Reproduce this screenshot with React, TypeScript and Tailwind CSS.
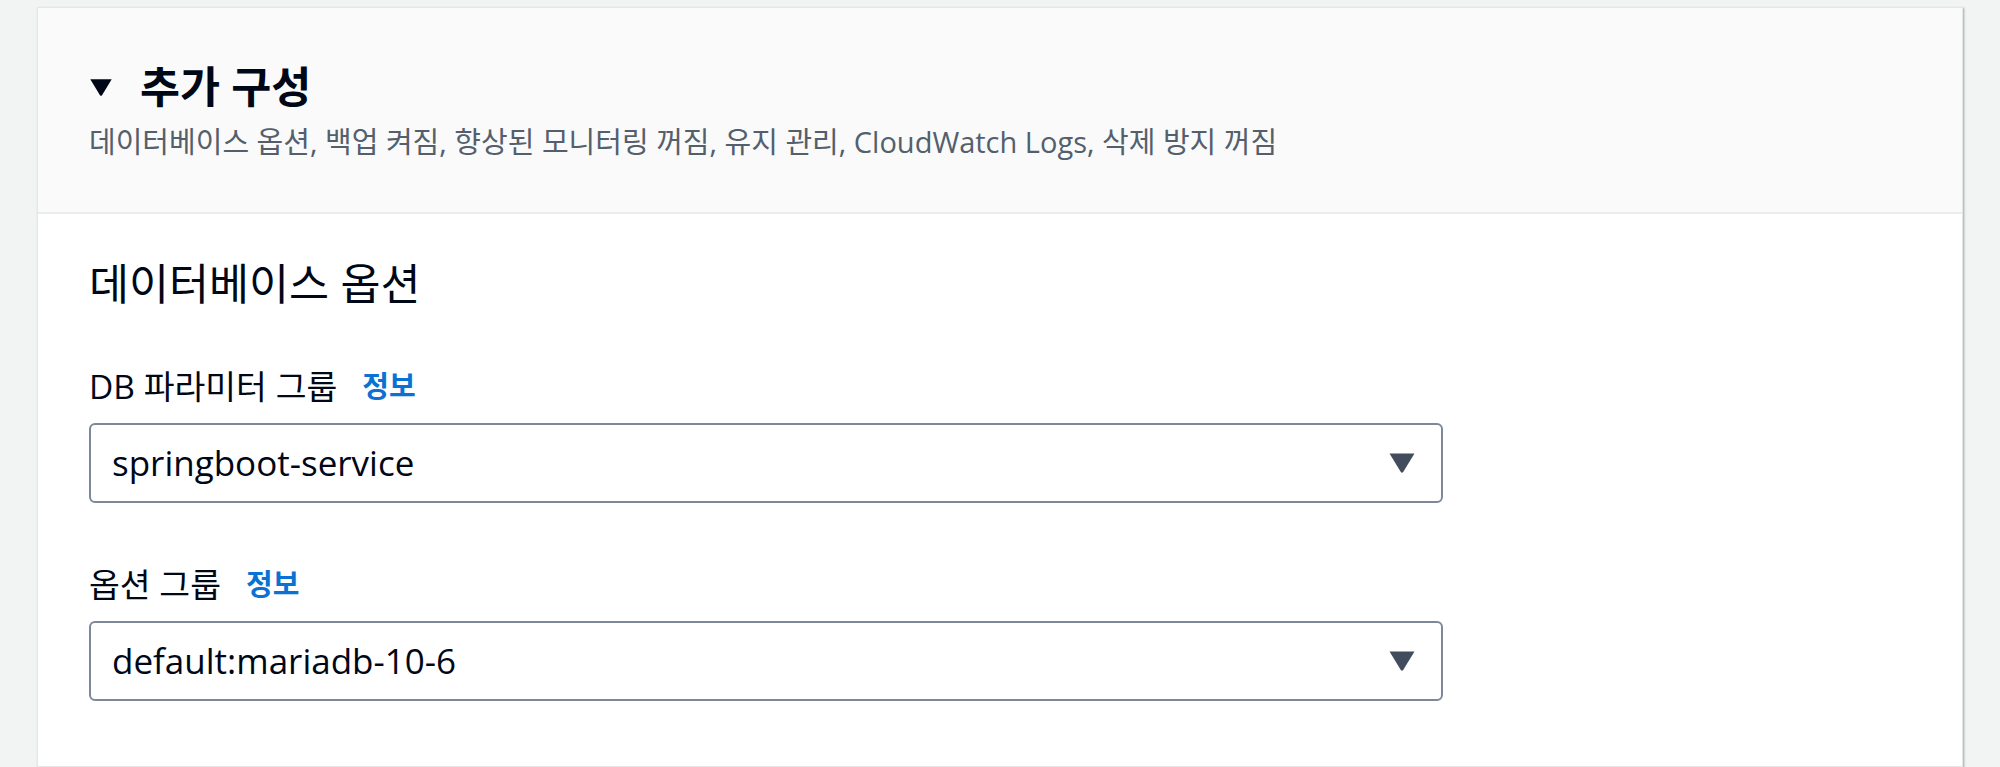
const FONT = "font-['Open_Sans','Noto_Sans_CJK_KR',sans-serif]";

function Caret({ className }: { className?: string }) {
  return (
    <svg viewBox="0 0 28 22" className={className} aria-hidden="true">
      <path d="M1.5 1.5 H26.5 L15.2 20 Q14 21.5 12.8 20 Z" fill="currentColor" />
    </svg>
  );
}

function Field({ label, value }: { label: string; value: string }) {
  return (
    <div className="flex flex-col">
      <div className="flex items-center gap-[25px] h-[40px]">
        <span className="text-[33.5px] leading-[40px] text-[#000716]">{label}</span>
        <span className="text-[29px] leading-[40px] font-bold text-[#0972d3]">정보</span>
      </div>
      <div className="mt-[17px] w-[1354px] h-[80px] flex items-center justify-between border-2 border-[#7d8998] rounded-[6px] bg-white pl-[21px] pr-[25px]">
        <span className="text-[35px] leading-[44px] text-[#000716]">{value}</span>
        <Caret className="w-[28px] h-[22px] text-[#414d5c]" />
      </div>
    </div>
  );
}

export default function App() {
  return (
    <div className={`min-h-[767px] w-full bg-[#f2f3f3] pl-[37px] pr-[37px] pt-[7px] ${FONT}`}>
      <div className="bg-white border border-[#e4e7e7] shadow-[1px_1px_2px_0_rgba(0,28,36,0.35)] min-h-[760px]">
        <div className="bg-[#fafafa] border-b-2 border-[#eaeded] pl-[51px] pt-[53px] pb-[51px]">
          <div className="flex items-center h-[52px]">
            <Caret className="w-[24px] h-[19px] text-[#000716]" />
            <h2 className="ml-[27px] text-[43.5px] font-bold text-[#000716] leading-[52px]">추가 구성</h2>
          </div>
          <p className="mt-[10px] text-[29px] leading-[38px] text-[#545f6d]">
            데이터베이스 옵션, 백업 켜짐, 향상된 모니터링 꺼짐, 유지 관리, CloudWatch Logs, 삭제 방지 꺼짐
          </p>
        </div>
        <div className="pl-[51px] pt-[45px] pb-[40px]">
          <h3 className="text-[43.5px] leading-[50px] text-[#000716]">데이터베이스 옵션</h3>
          <div className="mt-[57px] flex flex-col gap-[61px]">
            <Field label="DB 파라미터 그룹" value="springboot-service" />
            <Field label="옵션 그룹" value="default:mariadb-10-6" />
          </div>
        </div>
      </div>
    </div>
  );
}
